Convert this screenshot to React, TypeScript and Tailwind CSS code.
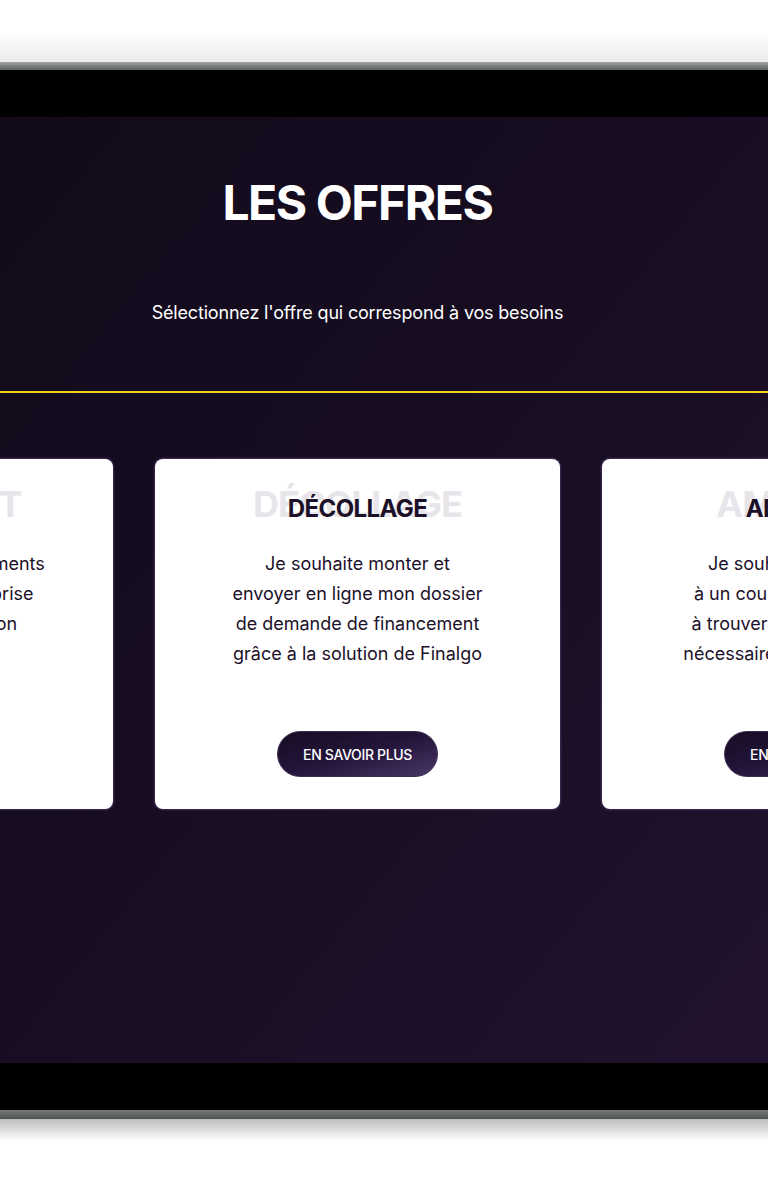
import React from "react";

type Offer = { title: string; lines: string[] };

const offers: Offer[] = [
  {
    title: "LANCEMENT",
    lines: [
      "Je recherche des financements",
      "adaptés pour mon entreprise",
      "dès sa phase de création",
      "en quelques clics",
    ],
  },
  {
    title: "DÉCOLLAGE",
    lines: [
      "Je souhaite monter et",
      "envoyer en ligne mon dossier",
      "de demande de financement",
      "grâce à la solution de Finalgo",
    ],
  },
  {
    title: "AMBITION",
    lines: [
      "Je souhaite faire appel",
      "à un courtier pour m'aider",
      "à trouver les financements",
      "nécessaires pour mon projet",
    ],
  },
];

function OfferCard({ offer }: { offer: Offer }) {
  return (
    <div className="w-[405px] h-[350px] shrink-0 bg-white rounded-[8px] ring-[1.5px] ring-[#33244a] flex flex-col items-center pt-[27px] pb-[32px]">
      <div className="grid items-baseline justify-items-center">
        <span className="[grid-area:1/1] text-[36px] leading-none font-bold tracking-tight text-[#e7e5ea]">
          {offer.title}
        </span>
        <span className="[grid-area:1/1] text-[24px] leading-none font-bold tracking-tight text-[#1b1027]">
          {offer.title}
        </span>
      </div>
      <div className="mt-[27px] flex flex-col items-center text-[18px] leading-[30px] text-[#1c1129] whitespace-nowrap">
        {offer.lines.map((l) => (
          <div key={l}>{l}</div>
        ))}
      </div>
      <button className="mt-auto w-[161px] h-[46px] rounded-full bg-gradient-to-br from-[#170c24] via-[#24153a] to-[#4a3766] border border-[#3b2c50] text-white text-[14px] font-medium tracking-tight">
        EN SAVOIR PLUS
      </button>
    </div>
  );
}

export default function App() {
  return (
    <div
      className="w-full h-[1200px] bg-white flex flex-col overflow-hidden"
      style={{ fontFamily: "Inter, 'Noto Sans', sans-serif" }}
    >
      <div className="h-[62px] bg-gradient-to-b from-white via-white to-[#ebebeb]" />
      <div className="h-[8px] bg-gradient-to-b from-[#a3a7a7] via-[#7b8080] to-[#5c6162]" />
      <div className="h-[47px] bg-black" />
      <div className="h-[946px] bg-gradient-to-br from-[#120a1b] via-[#180d22] to-[#22122e] flex flex-col overflow-hidden">
        <div className="pr-[53px] pt-[62px] flex flex-col items-center text-white">
          <h1 className="text-[48px] leading-none font-bold tracking-[-0.03em]">LES OFFRES</h1>
          <p className="mt-[77px] text-[18px] leading-none tracking-[-0.01em]">
            Sélectionnez l'offre qui correspond à vos besoins
          </p>
        </div>
        <div className="mt-[69px] h-[2px] w-full bg-[#f2d21e]" />
        <div className="mt-[66px] pr-[53px] flex justify-center gap-[42px]">
          {offers.map((o) => (
            <OfferCard key={o.title} offer={o} />
          ))}
        </div>
      </div>
      <div className="h-[47px] bg-black" />
      <div className="h-[9px] bg-gradient-to-b from-[#767b7c] to-[#4d5253]" />
      <div className="h-[22px] bg-gradient-to-b from-[#bdbdbd] to-white" />
    </div>
  );
}
